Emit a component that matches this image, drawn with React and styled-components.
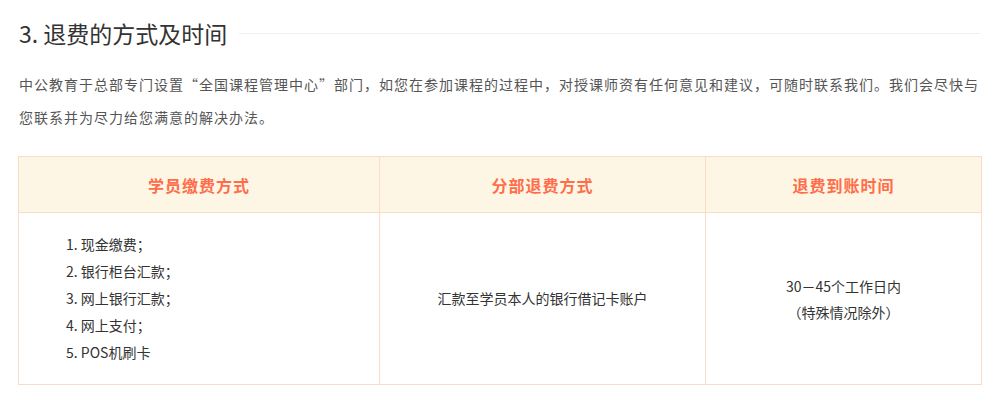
import styled, { createGlobalStyle } from "styled-components";

const GlobalStyle = createGlobalStyle`
  body {
    margin: 0;
    background: #fff;
    font-family: "Noto Sans CJK SC", "Noto Sans", sans-serif;
  }
`;

const Wrapper = styled.div`
  width: 993px;
  padding: 16px 13px 0 18px;
  box-sizing: border-box;
`;

const TitleRow = styled.div`
  display: flex;
  align-items: center;
  height: 34px;
  padding-left: 1px;
`;

const Title = styled.h3`
  margin: 0;
  font-size: 23px;
  font-weight: 400;
  line-height: 34px;
  color: #333;
  white-space: nowrap;
`;

const TitleLine = styled.div`
  flex: 1;
  height: 1px;
  margin-left: 12px;
  background: #efefef;
`;

const Paragraph = styled.p`
  margin: 18px 0 0 1px;
  font-size: 14px;
  line-height: 33px;
  letter-spacing: 1px;
  color: #555;
`;

const Table = styled.table`
  margin-top: 22px;
  width: 963px;
  border-collapse: collapse;
  table-layout: fixed;
`;

const HeadCell = styled.th`
  height: 55px;
  padding: 0;
  background: #fdf6e4;
  border: 1px solid #fbdcc6;
  font-size: 16px;
  font-weight: 700;
  color: #ff6d4a;
  text-align: center;
  letter-spacing: 1px;
`;

const Cell = styled.td`
  height: 171px;
  padding: 0;
  border: 1px solid #fbdcc6;
  font-size: 14px;
  color: #333;
  text-align: ${(p) => p.align || "center"};
  vertical-align: middle;
  line-height: ${(p) => p.lh || 27}px;
  padding-left: ${(p) => p.indent || 0}px;
`;

const List = styled.div`
  display: flex;
  flex-direction: column;
`;

const payWays = ["1. 现金缴费；", "2. 银行柜台汇款；", "3. 网上银行汇款；", "4. 网上支付；", "5. POS机刷卡"];

export default function App() {
  return (
    <>
      <GlobalStyle />
      <Wrapper>
        <TitleRow>
          <Title>3. 退费的方式及时间</Title>
          <TitleLine />
        </TitleRow>
        <Paragraph>
          中公教育于总部专门设置“全国课程管理中心”部门，如您在参加课程的过程中，对授课师资有任何意见和建议，可随时联系我们。我们会尽快与您联系并为尽力给您满意的解决办法。
        </Paragraph>
        <Table>
          <colgroup>
            <col style={{ width: 361 }} />
            <col style={{ width: 326 }} />
            <col style={{ width: 276 }} />
          </colgroup>
          <thead>
            <tr>
              <HeadCell>学员缴费方式</HeadCell>
              <HeadCell>分部退费方式</HeadCell>
              <HeadCell>退费到账时间</HeadCell>
            </tr>
          </thead>
          <tbody>
            <tr>
              <Cell align="left" indent={47}>
                <List>
                  {payWays.map((w) => (
                    <span key={w}>{w}</span>
                  ))}
                </List>
              </Cell>
              <Cell>汇款至学员本人的银行借记卡账户</Cell>
              <Cell lh={26}>
                30－45个工作日内
                <br />
                （特殊情况除外）
              </Cell>
            </tr>
          </tbody>
        </Table>
      </Wrapper>
    </>
  );
}
